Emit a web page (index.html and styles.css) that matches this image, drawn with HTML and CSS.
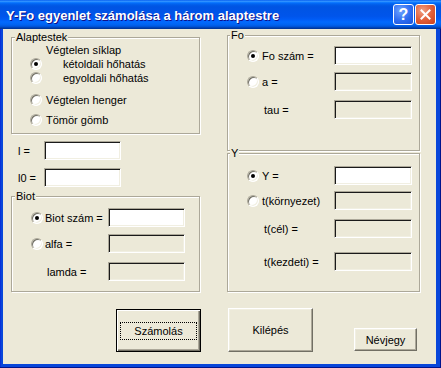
FILE: index.html
```html
<!DOCTYPE html>
<html lang="hu">
<head>
<meta charset="utf-8">
<title>Y-Fo egyenlet</title>
<link rel="stylesheet" href="styles.css">
</head>
<body>
<div class="window">
  <div class="titlebar">
    <span class="title">Y-Fo egyenlet számolása a három alaptestre</span>
    <div class="tbtns">
      <div class="tb help">?</div>
      <div class="tb close"><svg width="13" height="13" viewBox="0 0 13 13"><path d="M2.5 2.5 L10.5 10.5 M10.5 2.5 L2.5 10.5" stroke="#fff" stroke-width="2" stroke-linecap="square"/></svg></div>
    </div>
  </div>
  <div class="client">
    <div class="main">
      <div class="col col-left">
        <div class="group g-alap">
          <div class="legend">Alaptestek</div>
          <div class="row a-sik"><span class="txt">Végtelen síklap</span></div>
          <div class="row a-r"><span class="radio on"></span><span class="txt a-ind">kétoldali hőhatás</span></div>
          <div class="row a-r"><span class="radio"></span><span class="txt a-ind">egyoldali hőhatás</span></div>
          <div class="row a-r a-r3"><span class="radio"></span><span class="txt a-gap">Végtelen henger</span></div>
          <div class="row a-r a-r4"><span class="radio"></span><span class="txt a-gap">Tömör gömb</span></div>
        </div>
        <div class="field f-l"><span class="flbl">l =</span><span class="input"></span></div>
        <div class="field f-l0"><span class="flbl">l0 =</span><span class="input"></span></div>
        <div class="group g-biot">
          <div class="legend">Biot</div>
          <div class="row b-row b1"><span class="radio on"></span><span class="txt b-gap">Biot szám =</span><span class="input ent"></span></div>
          <div class="row b-row b2"><span class="radio"></span><span class="txt b-gap">alfa =</span><span class="input dis"></span></div>
          <div class="row b-row b3 noradio"><span class="txt">lamda =</span><span class="input dis"></span></div>
        </div>
      </div>
      <div class="col col-right">
        <div class="group g-fo">
          <div class="legend">Fo</div>
          <div class="row r-row fo1"><span class="radio on"></span><span class="txt r-gap">Fo szám =</span><span class="input ent"></span></div>
          <div class="row r-row fo2"><span class="radio"></span><span class="txt r-gap">a =</span><span class="input dis"></span></div>
          <div class="row r-row fo3 noradio"><span class="txt">tau =</span><span class="input dis"></span></div>
        </div>
        <div class="group g-y">
          <div class="legend">Y</div>
          <div class="row r-row y1"><span class="radio on"></span><span class="txt r-gap">Y =</span><span class="input ent"></span></div>
          <div class="row r-row y2"><span class="radio"></span><span class="txt r-gap">t(környezet)</span><span class="input dis"></span></div>
          <div class="row r-row y3 noradio"><span class="txt">t(cél) =</span><span class="input dis"></span></div>
          <div class="row r-row y4 noradio"><span class="txt">t(kezdeti) =</span><span class="input dis"></span></div>
        </div>
      </div>
    </div>
    <div class="buttons">
      <div class="btn btn-def"><span class="focus">Számolás</span></div>
      <div class="btn btn-exit">Kilépés</div>
      <div class="btn btn-about">Névjegy</div>
    </div>
  </div>
</div>
</body>
</html>
```

FILE: styles.css
```css
* { box-sizing: border-box; }
html, body { margin: 0; padding: 0; }
body {
  background: #fff;
  font-family: "Liberation Sans", Arial, sans-serif;
  font-size: 11px;
  color: #000;
}
.window {
  width: 441px;
  height: 368px;
  display: flex;
  flex-direction: column;
  background: #0846DA;
  box-shadow: inset -1px -1px 0 #00138C, inset 1px 0 0 #0831D9;
}
.titlebar {
  height: 29px;
  flex: none;
  display: flex;
  align-items: center;
  padding: 1px 5px 0 6px;
  background: linear-gradient(180deg, #0058EE 0%, #3593FF 4%, #288EFF 6%, #127DFF 8%, #036FFC 10%, #0262EE 14%, #0057E5 20%, #0054E3 24%, #0055EB 56%, #005BF5 66%, #026AFE 76%, #0062EF 86%, #0052D6 92%, #0040AB 96%, #003092 100%);
}
.title {
  flex: 1;
  color: #fff;
  font-weight: bold;
  font-size: 13px;
  line-height: 15px;
  text-shadow: 1px 1px 0 #0F1089;
  white-space: nowrap;
}
.tbtns { display: flex; gap: 1px; margin-top: -1px; }
.tb {
  width: 21px;
  height: 21px;
  border: 1px solid #fff;
  border-radius: 3px;
  display: flex;
  align-items: center;
  justify-content: center;
}
.help {
  background: radial-gradient(circle at 35% 30%, #6FA3FF 0%, #2E6CF0 55%, #1A53D9 100%);
  color: #fff;
  font-weight: bold;
  font-size: 16px;
  line-height: 16px;
}
.close {
  background: radial-gradient(circle at 35% 30%, #F0A083 0%, #E2603A 50%, #C8401A 100%);
}
.client {
  flex: 1;
  margin: 0 5px 4px 3px;
  background: #ECE9D8;
  display: flex;
  flex-direction: column;
}
.main {
  display: flex;
  padding-left: 8px;
  gap: 27px;
}
.col { display: flex; flex-direction: column; }
.col-left { width: 189px; }
.col-right { width: 193px; }

.group {
  border: 1px solid #ACA899;
  box-shadow: inset 1px 1px 0 #fff, 1px 1px 0 #fff;
  display: flex;
  flex-direction: column;
}
.legend {
  align-self: flex-start;
  height: 12px;
  line-height: 12px;
  margin: -7px 0 0 3px;
  padding: 0 1px;
  background: #ECE9D8;
  white-space: nowrap;
}
.row { display: flex; align-items: center; white-space: nowrap; }

.radio {
  flex: none;
  width: 12px;
  height: 12px;
  border-radius: 50%;
  background: #fff;
  border: 1px solid;
  border-color: #ACA899 #fff #fff #ACA899;
  box-shadow: inset 1px 1px 0 #716F64, inset -1px -1px 0 #F1EFE2;
  display: flex;
  align-items: center;
  justify-content: center;
}
.radio.on::after {
  content: "";
  width: 4px;
  height: 4px;
  border-radius: 50%;
  background: #000;
}

.input {
  flex: none;
  width: 77px;
  height: 19px;
  background: #fff;
  border: 1px solid;
  border-color: #ACA899 #fff #fff #ACA899;
  box-shadow: inset 1px 1px 0 #1A1A1A, inset -1px -1px 0 #F1EFE2;
}
.input.dis { background: #ECE9D8; }

/* Alaptestek */
.g-alap { margin-top: 8px; padding-bottom: 6px; }
.a-sik { height: 14px; padding-left: 34px; }
.a-r { height: 14px; padding-left: 18px; }
.a-r3 { margin-top: 8px; }
.a-r4 { margin-top: 6px; }
.a-ind { margin-left: 21px; }
.a-gap { margin-left: 4px; }

/* l, l0 */
.field { display: flex; align-items: center; height: 19px; padding-left: 7px; }
.f-l { margin-top: 7px; }
.f-l0 { margin-top: 8px; }
.flbl { width: 26px; }

/* Biot */
.g-biot { margin-top: 9px; padding-bottom: 10px; }
.b-row { height: 19px; padding-left: 19px; }
.b-row .input { margin-left: auto; margin-right: 14px; }
.b-gap { margin-left: 2px; }
.b-row.noradio { padding-left: 35px; }
.b1 { margin-top: 6px; }
.b2 { margin-top: 7px; }
.b3 { margin-top: 9px; }

/* right column */
.g-fo .legend, .g-y .legend { margin-left: 2px; }
.r-row { height: 19px; padding-left: 19px; }
.r-row .input { width: 78px; margin-left: auto; margin-right: 7px; }
.r-gap { margin-left: 3px; }
.r-row.noradio { padding-left: 36px; }
.g-fo { margin-top: 6px; padding-bottom: 31px; }
.fo1 { margin-top: 5px; }
.fo2 { margin-top: 7px; }
.fo3 { margin-top: 9px; }
.g-y { margin-top: 2px; padding-bottom: 20px; }
.y1 { margin-top: 7px; }
.y2 { margin-top: 6px; }
.y3 { margin-top: 9px; }
.y4 { margin-top: 14px; }

/* buttons */
.buttons {
  margin-top: auto;
  display: flex;
  align-items: flex-end;
  padding: 0 0 12px 113px;
}
.btn {
  flex: none;
  background: #ECE9D8;
  display: flex;
  align-items: center;
  justify-content: center;
  border: 1px solid;
  border-color: #fff #716F64 #716F64 #fff;
  box-shadow: inset -1px -1px 0 #ACA899, inset 1px 1px 0 #F1EFE2;
}
.btn-def {
  width: 85px;
  height: 43px;
  border: 1px solid #000;
  box-shadow: inset 1px 1px 0 #fff, inset -1px -1px 0 #716F64, inset -2px -2px 0 #ACA899;
}
.focus {
  width: 77px;
  height: 18px;
  border: 1px dotted #000;
  display: flex;
  align-items: center;
  justify-content: center;
}
.btn-exit { width: 85px; height: 44px; margin-left: 27px; }
.btn-about { width: 63px; height: 23px; margin-left: 41px; margin-bottom: 1px; }
```
